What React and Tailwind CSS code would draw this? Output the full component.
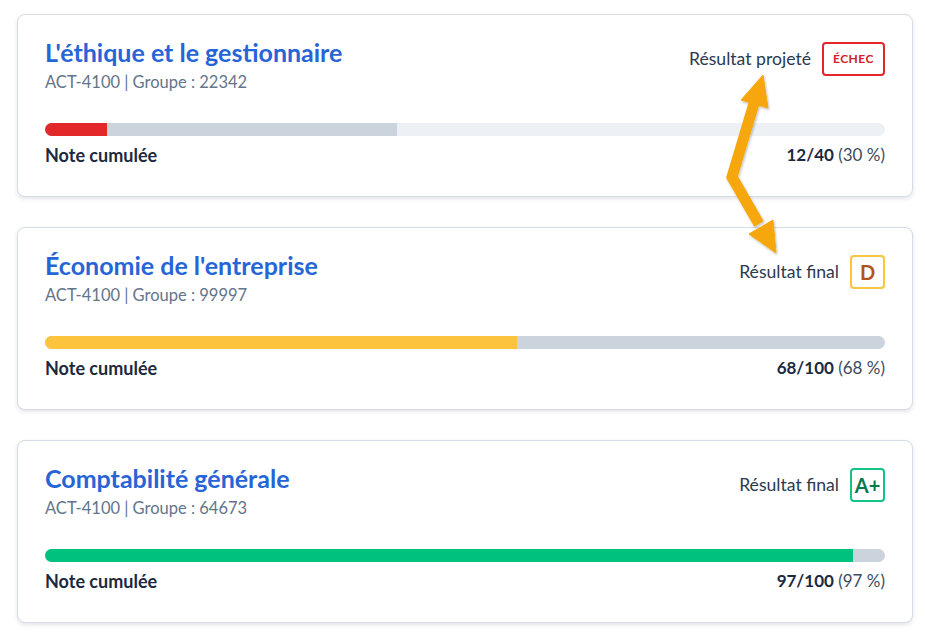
import React from "react";

const courses = [
  {
    title: "L'éthique et le gestionnaire",
    group: "22342",
    label: "Résultat projeté",
    badge: "ÉCHEC",
    badgeCls: "border-[#e3262b] text-[#d0202a] text-[12px] px-[9px] tracking-[0.5px]",
    segments: [
      { w: 7.4, cls: "bg-[#e3282a]" },
      { w: 34.5, cls: "bg-[#cbd3dc]" },
    ],
    track: "bg-[#edf1f5]",
    score: "12/40",
    pct: "(30 %)",
  },
  {
    title: "Économie de l'entreprise",
    group: "99997",
    label: "Résultat final",
    badge: "D",
    badgeCls: "border-[#fcc43d] text-[#b1531c] text-[20px] w-[35px]",
    segments: [{ w: 56.2, cls: "bg-[#fcc43d]" }],
    track: "bg-[#cbd3dc]",
    score: "68/100",
    pct: "(68 %)",
  },
  {
    title: "Comptabilité générale",
    group: "64673",
    label: "Résultat final",
    badge: "A+",
    badgeCls: "border-[#12c383] text-[#067a4c] text-[20px] w-[35px]",
    segments: [{ w: 96.2, cls: "bg-[#00c27f]" }],
    track: "bg-[#cbd3dc]",
    score: "97/100",
    pct: "(97 %)",
  },
];

function Card({ c }) {
  return (
    <div className="bg-white rounded-[8px] border border-[#d5dce5] shadow-[0_2px_4px_rgba(30,41,59,0.12)] px-[27px] pt-[23px] pb-[29px]">
      <div className="flex justify-between items-start">
        <div>
          <div className="text-[25px] leading-[28px] font-bold text-[#2765d6]">{c.title}</div>
          <div className="mt-[4px] text-[16.5px] leading-[24px] text-[#64748b]">
            ACT-4100 | Groupe : {c.group}
          </div>
        </div>
        <div className="flex items-center gap-[11px] mt-[4px]">
          <span className="text-[17.6px] text-[#2b3a4f]">{c.label}</span>
          <span
            className={`h-[34px] flex items-center justify-center rounded-[4px] border-2 font-bold ${c.badgeCls}`}
          >
            {c.badge}
          </span>
        </div>
      </div>
      <div className={`mt-[29px] h-[13px] rounded-full overflow-hidden flex ${c.track}`}>
        {c.segments.map((s, i) => (
          <div key={i} className={`h-full ${s.cls}`} style={{ width: `${s.w}%` }} />
        ))}
      </div>
      <div className="mt-[7px] flex justify-between items-center leading-[24px]">
        <span className="text-[18px] font-bold text-[#1b2a3f]">Note cumulée</span>
        <span className="text-[17px] text-[#3d4b5f]">
          <span className="font-bold text-[#1b2a3f]">{c.score}</span> {c.pct}
        </span>
      </div>
    </div>
  );
}

export default function App() {
  return (
    <div className="relative w-[925px] h-[638px] bg-white font-['Lato',sans-serif] overflow-hidden">
      <div className="ml-[17px] mt-[14px] w-[896px] flex flex-col gap-[30px]">
        {courses.map((c, i) => (
          <Card key={i} c={c} />
        ))}
      </div>
      <svg
        className="absolute left-0 top-0 pointer-events-none"
        width="925"
        height="638"
        viewBox="0 0 925 638"
      >
        <defs>
          <filter id="sh" x="-20%" y="-20%" width="140%" height="140%">
            <feDropShadow dx="1" dy="1.5" stdDeviation="1.2" floodColor="#000" floodOpacity="0.25" />
          </filter>
        </defs>
        <g filter="url(#sh)" fill="#f6a70f" stroke="#f6a70f">
          <polyline
            points="755,100 732,177 759,224"
            fill="none"
            strokeWidth="11"
            strokeLinejoin="miter"
          />
          <polygon points="763,75 768,108 741,100" strokeWidth="1" strokeLinejoin="round" />
          <polygon points="776,253 749,234 773,220" strokeWidth="1" strokeLinejoin="round" />
        </g>
      </svg>
    </div>
  );
}
